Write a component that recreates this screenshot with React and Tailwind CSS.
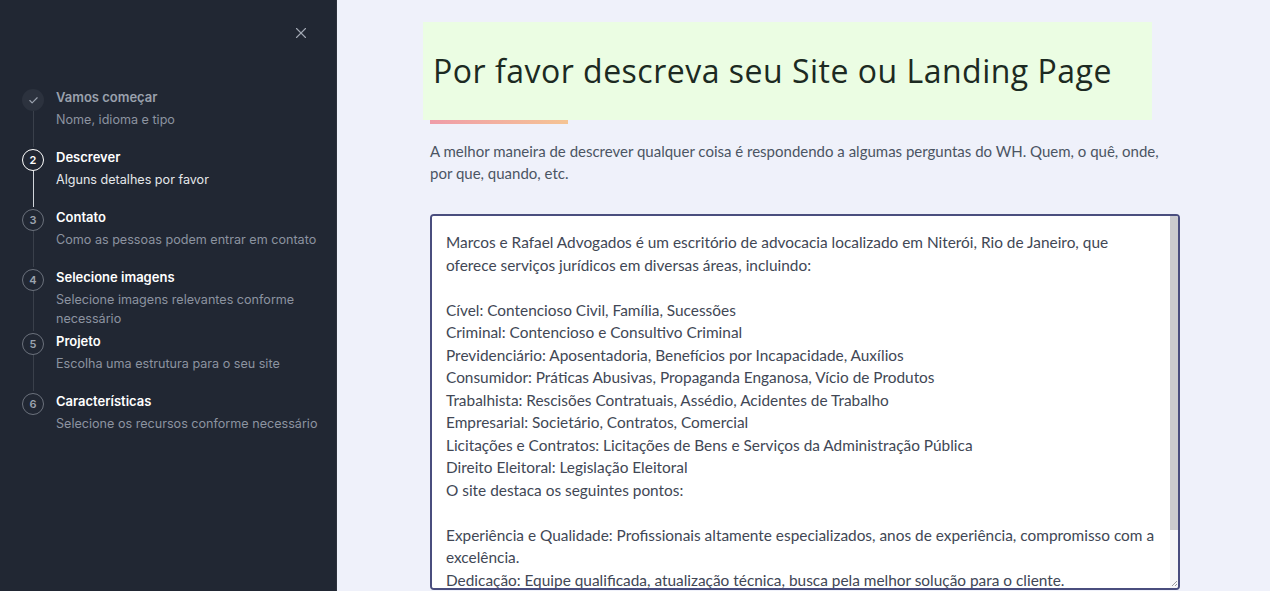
import { Check, X } from "lucide-react";

const steps = [
  { n: 1, title: "Vamos começar", sub: "Nome, idioma e tipo", state: "done" },
  { n: 2, title: "Descrever", sub: "Alguns detalhes por favor", state: "active" },
  { n: 3, title: "Contato", sub: "Como as pessoas podem entrar em contato", state: "todo" },
  { n: 4, title: "Selecione imagens", sub: "Selecione imagens relevantes conforme necessário", state: "todo" },
  { n: 5, title: "Projeto", sub: "Escolha uma estrutura para o seu site", state: "todo" },
  { n: 6, title: "Características", sub: "Selecione os recursos conforme necessário", state: "todo" },
];

const description = `Marcos e Rafael Advogados é um escritório de advocacia localizado em Niterói, Rio de Janeiro, que oferece serviços jurídicos em diversas áreas, incluindo:

Cível: Contencioso Civil, Família, Sucessões
Criminal: Contencioso e Consultivo Criminal
Previdenciário: Aposentadoria, Benefícios por Incapacidade, Auxílios
Consumidor: Práticas Abusivas, Propaganda Enganosa, Vício de Produtos
Trabalhista: Rescisões Contratuais, Assédio, Acidentes de Trabalho
Empresarial: Societário, Contratos, Comercial
Licitações e Contratos: Licitações de Bens e Serviços da Administração Pública
Direito Eleitoral: Legislação Eleitoral
O site destaca os seguintes pontos:

Experiência e Qualidade: Profissionais altamente especializados, anos de experiência, compromisso com a excelência.
Dedicação: Equipe qualificada, atualização técnica, busca pela melhor solução para o cliente.
Atendimento Personalizado: Foco nas necessidades de cada cliente.
Localização: Niterói, Rio de Janeiro.`;

const Step = ({ step, last }) => {
  const done = step.state === "done";
  const active = step.state === "active";
  return (
    <div className="flex gap-[12px] min-h-[60px]">
      <div className="flex flex-col items-center w-[22px] pt-[2px]">
        {done ? (
          <div className="w-[22px] h-[22px] rounded-full bg-[#2c323e] flex items-center justify-center">
            <Check size={11} strokeWidth={2.5} className="text-[#9aa1ad]" />
          </div>
        ) : (
          <div
            className={`w-[22px] h-[22px] rounded-full border flex items-center justify-center text-[11px] font-semibold ${
              active ? "border-white text-white" : "border-[#6b717c] text-[#9ca3af]"
            }`}
          >
            {step.n}
          </div>
        )}
        {!last && (
          <div
            className={`w-px flex-1 ${active ? "bg-[#d1d5db]" : "bg-[#3a404b]"}`}
          />
        )}
      </div>
      <div className="pb-[3px]">
        <div
          className={`text-[13px] leading-[20px] font-semibold ${
            done ? "text-[#9aa1ad]" : "text-white"
          }`}
        >
          {step.title}
        </div>
        <div
          className={`text-[12.6px] leading-[19px] mt-[3px] ${
            active ? "text-[#e5e7eb]" : "text-[#8c93a0]"
          }`}
        >
          {step.sub}
        </div>
      </div>
    </div>
  );
};

export default function App() {
  return (
    <div className="flex h-[591px] w-full overflow-hidden bg-[#eff1fa]">
      {/* SIDEBAR */}
      <aside
        className="w-[337px] shrink-0 bg-[#212733] border-r border-[#2c323d] pl-[22px] pr-[10px]"
        style={{ fontFamily: "Inter, 'Open Sans', sans-serif" }}
      >
        <div className="flex justify-end pt-[24px] pr-[16px] h-[87px]">
          <X size={18} strokeWidth={1.5} className="text-[#a3a9b4]" />
        </div>
        <div className="flex flex-col">
          {steps.map((s, i) => (
            <Step key={s.n} step={s} last={i === steps.length - 1} />
          ))}
        </div>
      </aside>

      {/* MAIN */}
      <main
        className="flex-1 pl-[93px]"
        style={{ fontFamily: "Lato, 'Liberation Sans', sans-serif" }}
      >
        <div className="w-[750px] pt-[22px]">
          <div className="-ml-[7px] w-[729px] h-[98px] bg-[#ebfde3] flex items-center pl-[10px]">
            <h1
              className="text-[32px] text-[#1c2a22] tracking-[0.5px]"
              style={{ fontFamily: "'Open Sans', sans-serif" }}
            >
              Por favor descreva seu Site ou Landing Page
            </h1>
          </div>
          <div className="w-[138px] h-[4px] bg-gradient-to-r from-[#ef9ca8] to-[#f5c493]" />
          <p className="mt-[16px] text-[15px] leading-[22px] text-[#4b5563]">
            A melhor maneira de descrever qualquer coisa é respondendo a algumas perguntas do WH. Quem, o quê, onde, por que, quando, etc.
          </p>

          {/* Textarea with scrollbar */}
          <div className="mt-[30px] h-[376px] flex bg-white border-2 border-[#4a4e7e] rounded-[4px] overflow-hidden">
            <textarea
              readOnly
              defaultValue={description}
              className="flex-1 h-full block resize-none overflow-hidden bg-white pl-[14px] pr-[12px] pt-[15px] text-[15.4px] leading-[22.5px] text-[#414755] outline-none"
            />
            <div className="w-[8px] flex flex-col justify-between bg-[#f6f6f7]">
              <div className="h-[314px] bg-[#cbcbce]" />
              <svg width="8" height="8" viewBox="0 0 8 8" className="mb-[1px]">
                <path d="M7 2 L2 7 M7 5 L5 7" stroke="#9a9aa0" strokeWidth="1" />
              </svg>
            </div>
          </div>
        </div>
      </main>
    </div>
  );
}
